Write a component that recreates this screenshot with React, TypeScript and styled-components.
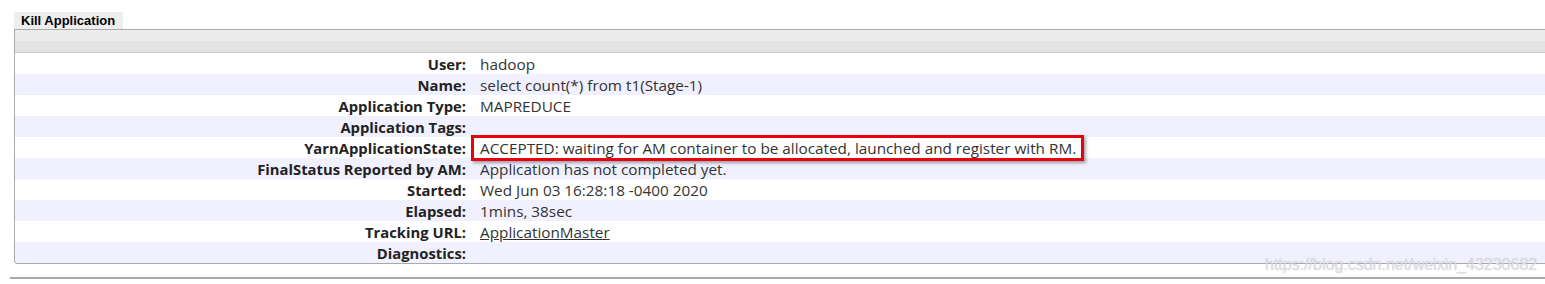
import React from "react";
import styled, { createGlobalStyle } from "styled-components";

const Global = createGlobalStyle`
  html, body { margin: 0; padding: 0; background: #fff; }
  body { width: 1545px; height: 284px; overflow: hidden; }
`;

const Page = styled.div`
  position: relative;
  width: 1545px;
  height: 284px;
  padding-top: 12px;
  box-sizing: border-box;
`;

const Tab = styled.div`
  margin-left: 14px;
  width: 109px;
  height: 17px;
  background: #eeeeee;
  font-family: "Liberation Sans", Arial, sans-serif;
  font-weight: bold;
  font-size: 13px;
  line-height: 17px;
  color: #000;
  padding-left: 7px;
  box-sizing: border-box;
`;

const Panel = styled.div`
  margin-left: 14px;
  border-top: 1px solid #aaaaaa;
  border-left: 1px solid #aaaaaa;
  border-bottom: 1px solid #aaaaaa;
  border-bottom-left-radius: 4px;
  overflow: hidden;
`;

const HeaderBar = styled.div`
  height: 22px;
  background: linear-gradient(to bottom, #ececec 0%, #ececec 50%, #e3e3e3 50%, #e3e3e3 100%);
  border-bottom: 1px solid #cccccc;
`;

const Row = styled.div<{ $alt: boolean }>`
  display: grid;
  grid-template-columns: 451px 1fr;
  height: 21px;
  align-items: center;
  background: ${(p) => (p.$alt ? "#f0f0fe" : "#ffffff")};
  font-family: "Open Sans", "Noto Sans", sans-serif;
  line-height: 21px;
  color: #333;
`;

const Label = styled.div`
  text-align: right;
  font-weight: bold;
  font-size: 14.8px;
  color: #222;
  white-space: nowrap;
  padding-top: 1px;
`;

const Value = styled.div`
  padding-left: 14px;
  font-size: 15.3px;
  white-space: nowrap;
  padding-top: 1px;
`;

const Link = styled.a`
  color: #333;
  text-decoration: underline;
`;

const Highlight = styled.span`
  position: relative;
  &::after {
    content: "";
    position: absolute;
    left: -9px;
    right: -8px;
    top: -3px;
    bottom: -3px;
    border: 3px solid #e8000b;
    box-shadow: 2px 2px 3px rgba(0, 0, 0, 0.35);
  }
`;

const Rule = styled.div`
  margin-top: 13px;
  margin-left: 10px;
  height: 2px;
  background: #aaaaaa;
`;

const Watermark = styled.div`
  position: absolute;
  left: 1265px;
  top: 256px;
  font-family: "Liberation Sans", Arial, sans-serif;
  font-size: 16px;
  color: rgba(225, 225, 235, 0.85);
  text-shadow: 0 0 1px rgba(160, 160, 170, 0.6);
  white-space: nowrap;
`;

type Item = { label: string; value?: React.ReactNode };

const items: Item[] = [
  { label: "User:", value: "hadoop" },
  { label: "Name:", value: "select count(*) from t1(Stage-1)" },
  { label: "Application Type:", value: "MAPREDUCE" },
  { label: "Application Tags:" },
  {
    label: "YarnApplicationState:",
    value: (
      <Highlight>
        ACCEPTED: waiting for AM container to be allocated, launched and register with RM.
      </Highlight>
    ),
  },
  { label: "FinalStatus Reported by AM:", value: "Application has not completed yet." },
  { label: "Started:", value: "Wed Jun 03 16:28:18 -0400 2020" },
  { label: "Elapsed:", value: "1mins, 38sec" },
  { label: "Tracking URL:", value: <Link href="#">ApplicationMaster</Link> },
  { label: "Diagnostics:" },
];

export default function App() {
  return (
    <Page>
      <Global />
      <Tab>Kill Application</Tab>
      <Panel>
        <HeaderBar />
        {items.map((it, i) => (
          <Row key={it.label} $alt={i % 2 === 1}>
            <Label>{it.label}</Label>
            <Value>{it.value}</Value>
          </Row>
        ))}
      </Panel>
      <Rule />
      <Watermark>https://blog.csdn.net/weixin_43230682</Watermark>
    </Page>
  );
}
